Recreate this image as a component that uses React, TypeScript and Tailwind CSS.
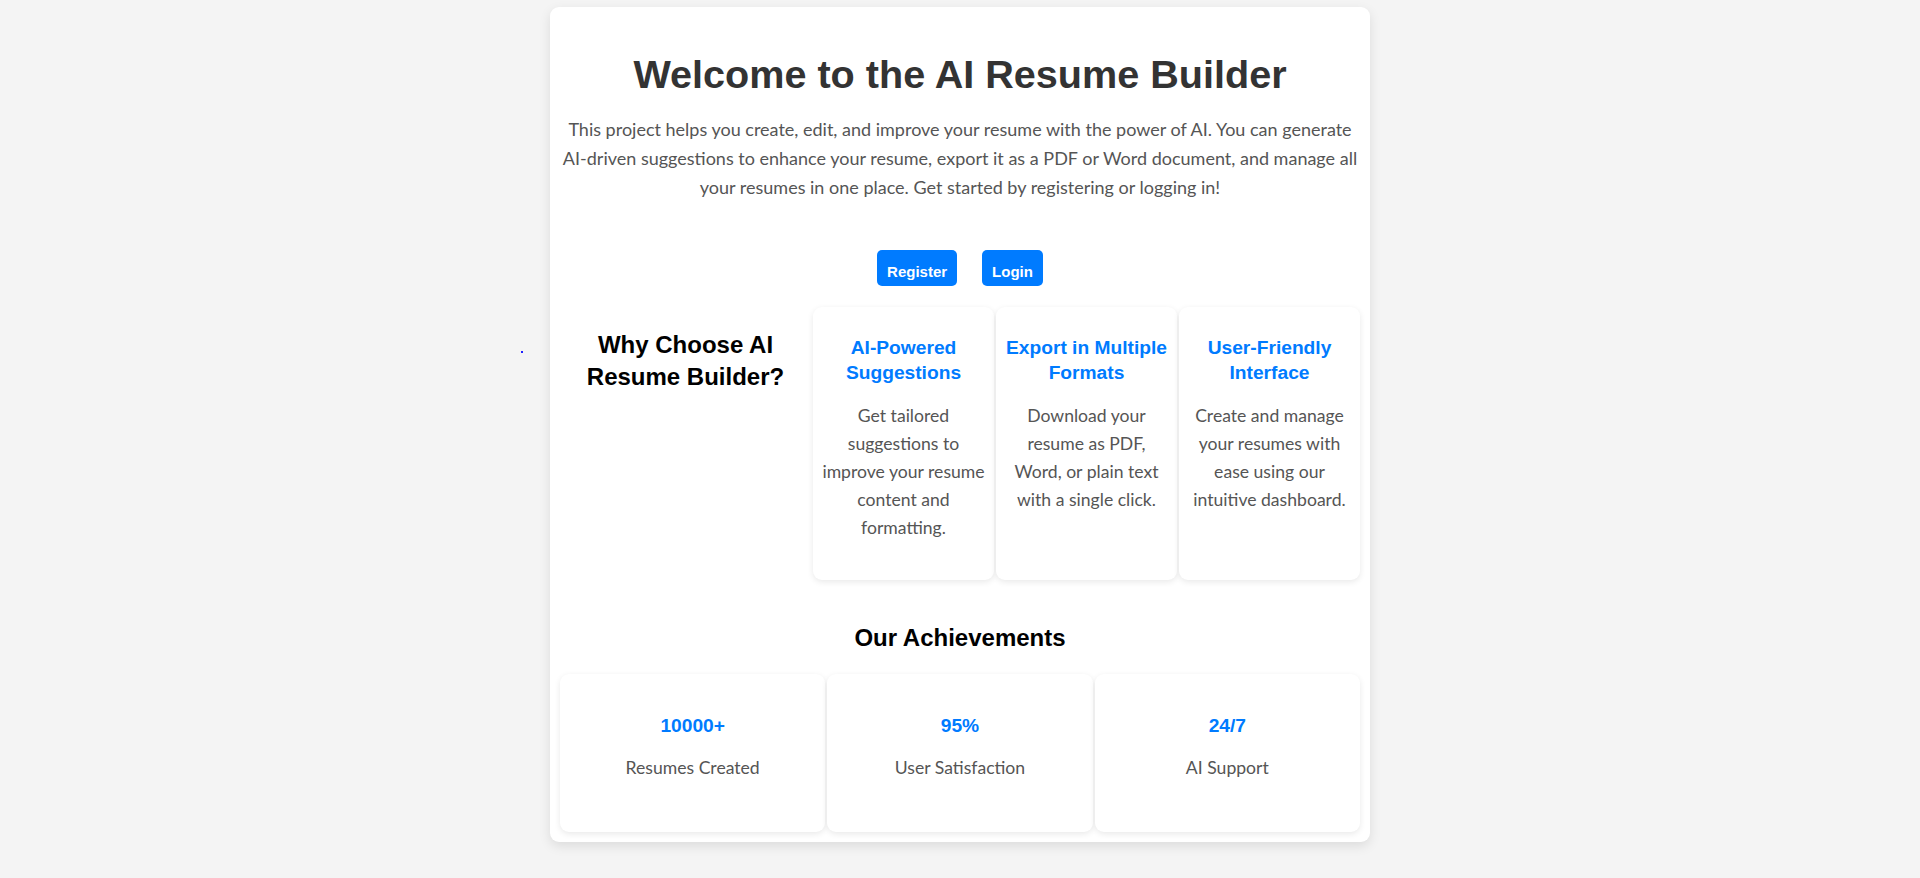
const features = [
  {
    title: "AI-Powered Suggestions",
    text: "Get tailored suggestions to improve your resume content and formatting.",
  },
  {
    title: "Export in Multiple Formats",
    text: "Download your resume as PDF, Word, or plain text with a single click.",
  },
  {
    title: "User-Friendly Interface",
    text: "Create and manage your resumes with ease using our intuitive dashboard.",
  },
];

const stats = [
  { value: "10000+", label: "Resumes Created" },
  { value: "95%", label: "User Satisfaction" },
  { value: "24/7", label: "AI Support" },
];

export default function App() {
  return (
    <div className="min-h-screen bg-[#f4f4f4] pt-[7px] pb-10 font-['Lato',sans-serif]">
      <span className="fixed left-[521px] top-[351px] h-[2px] w-[2px] bg-[#2020ff]" />
      <div className="mx-auto w-[820px] rounded-[9px] bg-white px-[10px] pt-[43px] pb-[10px] text-center shadow-[0_4px_12px_rgba(0,0,0,0.1)]">
        <h1 className="font-['Liberation_Sans',sans-serif] text-[39.6px] font-bold leading-[48px] text-[#333]">
          Welcome to the AI Resume Builder
        </h1>
        <p className="mt-[17px] text-[18px] leading-[28.8px] text-[#555]">
          This project helps you create, edit, and improve your resume with the power of AI. You can generate
          AI-driven suggestions to enhance your resume, export it as a PDF or Word document, and manage all
          your resumes in one place. Get started by registering or logging in!
        </p>

        <div className="mt-[49px] flex justify-center gap-[25px]">
          <button className="h-9 rounded-[5px] bg-[#007bff] px-[10px] pt-[8px] font-['Liberation_Sans',sans-serif] text-[15px] font-bold leading-[20px] text-white">
            Register
          </button>
          <button className="h-9 rounded-[5px] bg-[#007bff] px-[10px] pt-[8px] font-['Liberation_Sans',sans-serif] text-[15px] font-bold leading-[20px] text-white">
            Login
          </button>
        </div>

        <div className="mt-[21px] flex gap-[2px]">
          <h2 className="mt-[22px] w-[251px] shrink-0 px-4 font-['Liberation_Sans',sans-serif] text-[24px] font-bold leading-[32px] text-black">
            Why Choose AI Resume Builder?
          </h2>
          {features.map((f) => (
            <div
              key={f.title}
              className="w-[181px] shrink-0 rounded-[9px] bg-white px-[8px] pt-[28px] pb-[38px] shadow-[0_2px_6px_rgba(0,0,0,0.09)]"
            >
              <h3 className="font-['Liberation_Sans',sans-serif] text-[19.2px] font-bold leading-[25px] text-[#007bff]">
                {f.title}
              </h3>
              <p className="mt-[17px] text-[17.6px] leading-[28px] text-[#555]">{f.text}</p>
            </div>
          ))}
        </div>

        <h2 className="mt-[42px] font-['Liberation_Sans',sans-serif] text-[24px] font-bold leading-[32px] text-black">
          Our Achievements
        </h2>
        <div className="mt-[20px] grid grid-cols-3 gap-[2px]">
          {stats.map((s) => (
            <div
              key={s.label}
              className="rounded-[9px] bg-white pt-[39px] pb-[50px] shadow-[0_2px_6px_rgba(0,0,0,0.09)]"
            >
              <h3 className="font-['Liberation_Sans',sans-serif] text-[19.2px] font-bold leading-[25px] text-[#007bff]">
                {s.value}
              </h3>
              <p className="mt-[16px] text-[17.6px] leading-[28px] text-[#555]">{s.label}</p>
            </div>
          ))}
        </div>
      </div>
    </div>
  );
}
